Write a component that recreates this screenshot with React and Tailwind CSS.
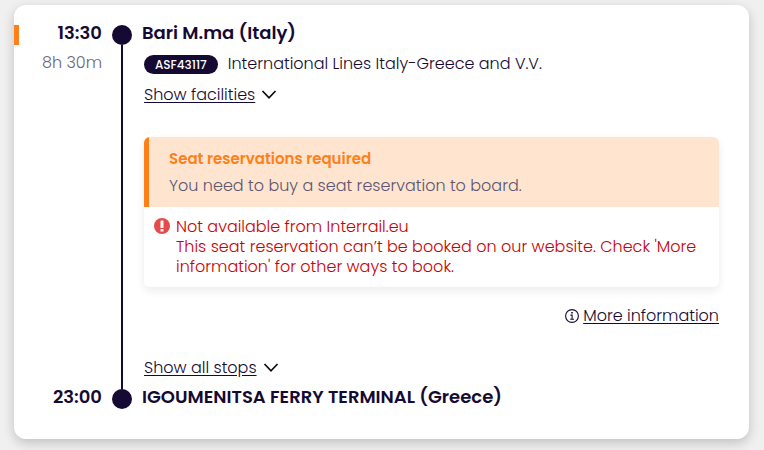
import React from "react";

const ChevronDown = () => (
  <svg width="16" height="10" viewBox="0 0 16 10" fill="none" aria-hidden="true">
    <path d="M1.5 1L8 7.8 14.5 1" stroke="#0b0b14" strokeWidth="1.7" />
  </svg>
);

const ErrorIcon = () => (
  <svg width="16" height="16" viewBox="0 0 16 16" aria-hidden="true">
    <circle cx="8" cy="8" r="8" fill="#e54b4b" />
    <rect x="6.5" y="2.5" width="3" height="7.5" rx="0.6" fill="#fff" />
    <rect x="6.5" y="11" width="3" height="2.5" rx="0.6" fill="#fff" />
  </svg>
);

const InfoIcon = () => (
  <svg width="14" height="14" viewBox="0 0 14 14" fill="none" aria-hidden="true">
    <circle cx="7" cy="7" r="6.4" stroke="#150a33" strokeWidth="1.1" />
    <rect x="6.2" y="3" width="1.6" height="1.5" fill="#150a33" />
    <path d="M5.4 6.1h1.7v4M5.2 10.3h3.8" stroke="#150a33" strokeWidth="1.1" />
  </svg>
);

const Toggle = ({ children }) => (
  <button
    type="button"
    className="flex items-center gap-1.5 text-base leading-5 font-light"
  >
    <span className="underline underline-offset-2">{children}</span>
    <ChevronDown />
  </button>
);

const Notice = () => (
  <div className="rounded-md overflow-hidden shadow-[0_4px_8px_rgba(21,10,51,0.08)]">
    <div className="border-l-5 border-[#ff8019] bg-[#ffe5d0] pl-5 pr-4 py-2.5">
      <h3 className="text-[15px] leading-6 font-semibold text-[#ff8019]">
        Seat reservations required
      </h3>
      <p className="mt-1 text-base leading-5.5 font-light text-[#5b5570]">
        You need to buy a seat reservation to board.
      </p>
    </div>
    <div className="flex gap-1.5 bg-white p-2.5 text-base leading-5 font-light text-[#cc0000]">
      <span className="shrink-0 pt-px">
        <ErrorIcon />
      </span>
      <div>
        <p>Not available from Interrail.eu</p>
        <p>
          This seat reservation can’t be booked on our website. Check 'More
          information' for other ways to book.
        </p>
      </div>
    </div>
  </div>
);

const App = () => {
  return (
    <div className="min-h-screen bg-[#f0f0f0] pt-[5px] pb-[11px] pl-3.5 pr-[15px] font-['Poppins','Inter',sans-serif] text-[#150a33]">
      <div className="grid grid-cols-[88px_20px_minmax(0,1fr)] gap-x-2.5 rounded-xl bg-white pt-4 pb-7.5 pr-7.5 shadow-[0_4px_12px_rgba(0,0,0,0.2)]">
        <div>
          <div className="flex items-center justify-between">
            <span className="mt-1 h-5 w-[5px] bg-[#ff8019]" />
            <span className="text-lg leading-6 font-semibold">13:30</span>
          </div>
          <p className="mt-2 text-right text-base leading-5 font-light text-[#6b667c]">
            8h 30m
          </p>
        </div>

        <div className="row-span-2 flex flex-col items-center pt-1">
          <span className="size-5 rounded-full bg-[#150a33]" />
          <span className="w-0.5 flex-1 bg-[#150a33]" />
          <span className="size-5 rounded-full bg-[#150a33]" />
        </div>

        <div className="pb-[7px]">
          <h2 className="text-lg leading-6 font-semibold">Bari M.ma (Italy)</h2>
          <div className="pl-0.5">
            <div className="mt-[9px] flex items-center gap-2.5">
              <span className="rounded-full bg-[#150a33] px-[11px] text-xs leading-[19px] font-medium text-white">
                ASF43117
              </span>
              <span className="text-base leading-5 font-light">
                International Lines Italy-Greece and V.V.
              </span>
            </div>
            <div className="mt-[11px]">
              <Toggle>Show facilities</Toggle>
            </div>
            <div className="mt-8">
              <Notice />
            </div>
            <div className="mt-[19px] flex justify-end">
              <a
                href="#more"
                className="flex items-center gap-1 text-base leading-5 font-light"
              >
                <InfoIcon />
                <span className="underline underline-offset-2">
                  More information
                </span>
              </a>
            </div>
            <div className="mt-8">
              <Toggle>Show all stops</Toggle>
            </div>
          </div>
        </div>

        <p className="text-right text-lg leading-6 font-semibold">23:00</p>
        <h2 className="text-lg leading-6 font-semibold">
          IGOUMENITSA FERRY TERMINAL (Greece)
        </h2>
      </div>
    </div>
  );
};

export default App;
